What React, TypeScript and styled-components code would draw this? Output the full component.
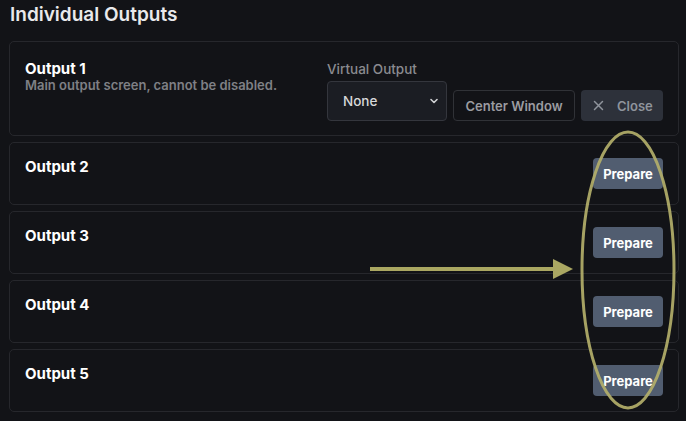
import React from 'react';
import styled, { createGlobalStyle } from 'styled-components';

const GlobalStyle = createGlobalStyle`
    html, body {
        margin: 0;
        padding: 0;
        background: #121317;
    }
    body {
        font-family: Inter, "Noto Sans", sans-serif;
        color: #f2f2f3;
    }
`;

const Page = styled.div`
    position: relative;
    width: 686px;
    height: 421px;
    overflow: hidden;
    padding: 1px 7px 0 9px;
    box-sizing: border-box;
`;

const Title = styled.h1`
    margin: 0 0 13px 1px;
    font-size: 19px;
    font-weight: 600;
    line-height: 27px;
    color: #e9e9eb;
`;

const List = styled.div`
    display: flex;
    flex-direction: column;
    gap: 6px;
`;

const Card = styled.div<{ $tall?: boolean }>`
    display: flex;
    justify-content: space-between;
    align-items: flex-start;
    height: ${p => (p.$tall ? 95 : 63)}px;
    box-sizing: border-box;
    border: 1px solid #26272c;
    border-radius: 5px;
    padding: ${p => (p.$tall ? '17px 15px 0 15px' : '14px 15px 0 15px')};
`;

const Info = styled.div`
    display: flex;
    flex-direction: column;
`;

const Name = styled.div`
    font-size: 15px;
    font-weight: 700;
    line-height: 19px;
    color: #ffffff;
`;

const Desc = styled.div`
    font-size: 13px;
    font-weight: 600;
    line-height: 14px;
    color: #7f8085;
`;

const Controls = styled.div`
    display: flex;
    align-items: flex-end;
    gap: 6px;
    padding-top: 2px;
`;

const Field = styled.div`
    display: flex;
    flex-direction: column;
    gap: 3px;
`;

const Label = styled.div`
    font-size: 13.5px;
    font-weight: 500;
    color: #8a8b90;
    line-height: 17px;
`;

const Select = styled.div`
    display: flex;
    align-items: center;
    justify-content: space-between;
    width: 120px;
    height: 40px;
    box-sizing: border-box;
    padding: 0 6px 0 15px;
    background: #1b1d23;
    border: 1px solid #34363d;
    border-radius: 4px;
    font-size: 13.5px;
    font-weight: 500;
    color: #d7d8da;
`;

const OutlineButton = styled.button`
    height: 31px;
    width: 122px;
    box-sizing: border-box;
    padding: 0;
    background: transparent;
    border: 1px solid #303237;
    border-radius: 4px;
    font-family: inherit;
    font-size: 13px;
    font-weight: 600;
    color: #9b9ca1;
`;

const CloseButton = styled.button`
    display: flex;
    align-items: center;
    gap: 13px;
    width: 82px;
    height: 31px;
    box-sizing: border-box;
    padding: 0 0 0 12px;
    background: #2d313a;
    border: none;
    border-radius: 4px;
    font-family: inherit;
    font-size: 13px;
    font-weight: 600;
    color: #8f949c;
`;

const PrepareButton = styled.button`
    margin-top: 1px;
    width: 70px;
    height: 31px;
    padding: 0;
    background: #515d70;
    border: none;
    border-radius: 4px;
    font-family: inherit;
    font-size: 13px;
    font-weight: 700;
    color: #ffffff;
`;

const Overlay = styled.svg`
    position: absolute;
    left: 0;
    top: 0;
    pointer-events: none;
`;

const Chevron = () => (
    <svg width="12" height="12" viewBox="0 0 12 12">
        <path d="M3 4.5 L6 7.5 L9 4.5" fill="none" stroke="#cfd0d3" strokeWidth="1.6" strokeLinecap="round" strokeLinejoin="round" />
    </svg>
);

const XIcon = () => (
    <svg width="11" height="11" viewBox="0 0 11 11">
        <path d="M1.5 1.5 L9.5 9.5 M9.5 1.5 L1.5 9.5" stroke="#8f949c" strokeWidth="1.5" strokeLinecap="round" />
    </svg>
);

const outputs = [2, 3, 4, 5];

export default function App() {
    return (
        <Page>
            <GlobalStyle />
            <Title>Individual Outputs</Title>
            <List>
                <Card $tall>
                    <Info>
                        <Name>Output 1</Name>
                        <Desc>Main output screen, cannot be disabled.</Desc>
                    </Info>
                    <Controls>
                        <Field>
                            <Label>Virtual Output</Label>
                            <Select>
                                None
                                <Chevron />
                            </Select>
                        </Field>
                        <OutlineButton>Center Window</OutlineButton>
                        <CloseButton>
                            <XIcon />
                            Close
                        </CloseButton>
                    </Controls>
                </Card>
                {outputs.map(n => (
                    <Card key={n}>
                        <Name>Output {n}</Name>
                        <PrepareButton>Prepare</PrepareButton>
                    </Card>
                ))}
            </List>
            <Overlay width="686" height="421" viewBox="0 0 686 421">
                <ellipse cx="628" cy="270" rx="46" ry="138" fill="none" stroke="#b3af6a" strokeWidth="3" opacity="0.92" />
                <line x1="370" y1="269" x2="556" y2="269" stroke="#aaa762" strokeWidth="4" />
                <polygon points="553,259 573,269 553,279" fill="#aaa762" />
            </Overlay>
        </Page>
    );
}
